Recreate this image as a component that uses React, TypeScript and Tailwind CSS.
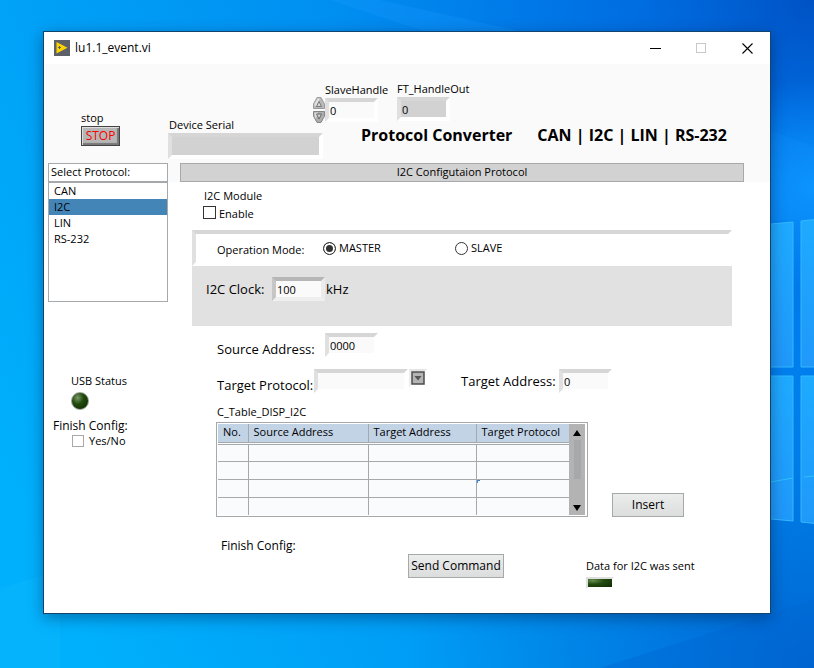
import { useState, type ReactNode } from 'react';

const PROTOCOLS = ['CAN', 'I2C', 'LIN', 'RS-232'];
const ROWS = [0, 1, 2, 3];
const BEVEL = 'border-4 border-t-[#d6d6d6] border-l-[#e0e0e0]';
const BEVEL_WHITE = BEVEL + ' border-r-white border-b-white';

function Wallpaper() {
  return (
    <svg
      className="absolute inset-0 h-full w-full"
      viewBox="0 0 814 668"
      preserveAspectRatio="none"
      aria-hidden="true"
    >
      <defs>
        <linearGradient id="sky" x1="0" y1="0.7" x2="1" y2="0.3">
          <stop offset="0" stopColor="#00b0fc" />
          <stop offset="0.5" stopColor="#0094f2" />
          <stop offset="1" stopColor="#007cf0" />
        </linearGradient>
        <radialGradient id="topDark" cx="1" cy="0" r="0.6">
          <stop offset="0" stopColor="#0052c4" />
          <stop offset="0.35" stopColor="#0064d8" stopOpacity="0.7" />
          <stop offset="1" stopColor="#0070e0" stopOpacity="0" />
        </radialGradient>
        <radialGradient id="bottomDark" cx="1" cy="1" r="0.5">
          <stop offset="0" stopColor="#0064d0" />
          <stop offset="1" stopColor="#0078dc" stopOpacity="0" />
        </radialGradient>
        <radialGradient id="glow" cx="1" cy="0.28" r="0.16">
          <stop offset="0" stopColor="#0a94ff" />
          <stop offset="1" stopColor="#0a94ff" stopOpacity="0" />
        </radialGradient>
        <linearGradient id="pane" x1="0" y1="0" x2="0" y2="1">
          <stop offset="0" stopColor="#1eaaff" />
          <stop offset="1" stopColor="#2098fa" />
        </linearGradient>
      </defs>
      <rect width="814" height="668" fill="url(#sky)" />
      <rect width="814" height="668" fill="url(#topDark)" />
      <rect width="814" height="668" fill="url(#bottomDark)" />
      <rect width="814" height="668" fill="url(#glow)" />
      <path d="M330 0L450 40H560L380 0Z" fill="#1c9cff" opacity="0.25" />
      <path d="M770 130L814 146V220H770Z" fill="#1c9cff" opacity="0.15" />
      <path d="M600 668L814 600V668Z" fill="#0064d0" opacity="0.35" />
      <path d="M0 588L60 570V668H0Z" fill="#10b8ff" opacity="0.3" />
      <g fill="url(#pane)" stroke="#35b8ff" strokeWidth="1">
        <path d="M760 225L793 222V367H760Z" />
        <path d="M801 221L820 219V367H801Z" />
        <path d="M760 376H793V521L760 518Z" />
        <path d="M801 376H820V524L801 522Z" />
      </g>
      <path d="M770 482L793 478M804 477L814 476" stroke="#2cc0ff" strokeWidth="1" />
    </svg>
  );
}

function AppIcon() {
  return (
    <svg className="h-4 w-4" viewBox="0 0 16 16" aria-hidden="true">
      <rect width="16" height="16" fill="#5d6066" />
      <path d="M2.5 2L13.5 7.7L2.5 13.5Z" fill="#fdd302" />
      <path d="M4 7.5H7M5.5 6V9" stroke="#5d6066" strokeWidth="1" />
    </svg>
  );
}

function Spinner() {
  return (
    <div className="flex h-[26px] w-3 flex-col">
      <button type="button" aria-label="Increase slave handle" className="h-[13px] w-3">
        <svg viewBox="0 0 12 13" className="block h-[13px] w-3">
          <path d="M4 .5H8L11.500 7V11.500H.5V7Z" fill="#b9b9b9" stroke="#9a9a9a" />
          <path d="M4.500 1.500H7L3 9H1.500V7Z" fill="#e2e2e2" />
          <path d="M6 4.500L8.500 9.500H3.500Z" fill="#d8d8d8" stroke="#666" strokeWidth=".8" />
        </svg>
      </button>
      <button type="button" aria-label="Decrease slave handle" className="h-[13px] w-3">
        <svg viewBox="0 0 12 13" className="block h-[13px] w-3">
          <path d="M.5 1.500H11.500V6L8 12.500H4L.5 6Z" fill="#adadad" stroke="#858585" />
          <path d="M1.500 2.500H5L3 9L1.500 6Z" fill="#dcdcdc" />
          <path d="M3.500 4H8.500L6 9Z" fill="#d0d0d0" stroke="#555" strokeWidth=".8" />
        </svg>
      </button>
    </div>
  );
}

function TitleBar() {
  return (
    <header className="flex h-8 items-center bg-white pl-2.5">
      <AppIcon />
      <h1 className="flex-1 pl-[5px] text-[12px]">lu1.1_event.vi</h1>
      <button type="button" aria-label="Minimize" className="flex h-8 w-[46px] items-center justify-center">
        <svg width="11" height="11" viewBox="0 0 11 11" shapeRendering="crispEdges">
          <path d="M0 5.500H11" stroke="#000" />
        </svg>
      </button>
      <button type="button" aria-label="Maximize" disabled className="flex h-8 w-[46px] items-center justify-center">
        <svg width="11" height="11" viewBox="0 0 11 11" shapeRendering="crispEdges">
          <rect x=".5" y=".5" width="9" height="9" fill="none" stroke="#c8c8c8" />
        </svg>
      </button>
      <button type="button" aria-label="Close" className="flex h-8 w-[46px] items-center justify-center">
        <svg width="11" height="11" viewBox="0 0 11 11">
          <path d="M.5 .5L10.500 10.500M10.500 .5L.5 10.500" stroke="#000" strokeWidth="1.100" />
        </svg>
      </button>
    </header>
  );
}

function PushButton({ className, children }: { className: string; children: ReactNode }) {
  return (
    <button
      type="button"
      className={'h-6 border border-[#a6a9ac] bg-linear-to-b from-[#ebecec] to-[#dcdddd] text-[12px] ' + className}
    >
      {children}
    </button>
  );
}

function TopPanel() {
  return (
    <section className="h-[99px] bg-[#fafafa]">
      <div className="flex pt-4 pl-[269px]">
        <div className="pt-[17px]">
          <Spinner />
        </div>
        <div className="flex w-[72px] flex-col">
          <label htmlFor="slave" className="pt-0.5 whitespace-nowrap">SlaveHandle</label>
          <input id="slave" defaultValue="0" className={'h-6 w-[53px] bg-[#fafafa] pl-px outline-none ' + BEVEL_WHITE} />
        </div>
        <div className="flex flex-col">
          <label htmlFor="ftout" className="pt-px">FT_HandleOut</label>
          <input id="ftout" readOnly value="0" className={'h-6 w-[53px] bg-[#d2d2d2] pl-px outline-none ' + BEVEL_WHITE} />
        </div>
      </div>
      <div className="-mt-[13px] flex pl-[37px]">
        <div className="w-[87px]">
          <p>stop</p>
          <button
            type="button"
            className="block h-5 w-[39px] border border-[#444] bg-[#b6b6b6] text-[12px] leading-4 text-[#f80000] shadow-[inset_1px_1px_0_#ddd,inset_-2px_-2px_1px_#777]"
          >
            STOP
          </button>
        </div>
        <div className="flex w-[155px] flex-col pt-[7px]">
          <label htmlFor="serial" className="pl-px">Device Serial</label>
          <input id="serial" readOnly value="" className={'h-[26px] w-full bg-[#d2d2d2] outline-none ' + BEVEL_WHITE} />
        </div>
        <h2 className="flex gap-[25px] pt-[15px] pl-[38px] text-[16px] leading-5 font-bold whitespace-nowrap">
          <span>Protocol Converter</span>
          <span>CAN | I2C | LIN | RS-232</span>
        </h2>
      </div>
    </section>
  );
}

function Sidebar() {
  const [selected, setSelected] = useState('I2C');
  return (
    <aside className="w-[120px]">
      <ul role="listbox" aria-labelledby="protocols" className="h-[120px] border border-[#a6a9ac] bg-white">
        {PROTOCOLS.map((name) => (
          <li key={name} role="option" aria-selected={name === selected}>
            <button
              type="button"
              onClick={() => setSelected(name)}
              className={'block h-4 w-full pl-[5px] text-left ' + (name === selected ? 'bg-[#4485b8]' : 'bg-white')}
            >
              {name}
            </button>
          </li>
        ))}
      </ul>
      <div className="pt-[71px] pl-[23px]">
        <p>USB Status</p>
        <span className="mt-[3px] block h-[18px] w-[18px] rounded-full border border-[#9a9f98] bg-radial-[at_35%_30%] from-[#7a9a6a] via-[#214a0c] via-40% to-[#0c2402]" />
      </div>
      <p className="mt-2 pl-[5px] text-[12px]">Finish Config:</p>
      <label className="flex h-3.5 items-center gap-[5px] pl-6">
        <input type="checkbox" className="h-3 w-3 appearance-none border border-[#a6a9ac] bg-white checked:bg-[#4485b8]" />
        Yes/No
      </label>
    </aside>
  );
}

function ModeRadio({ label, checked, onPick }: { label: string; checked: boolean; onPick: () => void }) {
  return (
    <label className="flex items-center gap-[3px]">
      <input
        type="radio"
        name="mode"
        checked={checked}
        onChange={onPick}
        className="h-[13px] w-[13px] appearance-none rounded-full border border-[#333] bg-white checked:bg-[#333] checked:shadow-[inset_0_0_0_2px_#fff]"
      />
      {label}
    </label>
  );
}

function ResultTable() {
  return (
    <div className="flex w-[372px] border border-[#a6a9ac] bg-white p-px">
      <table className="flex-1 table-fixed border-collapse bg-[#f9fbfd]">
        <thead>
          <tr className="h-[19px] border-b-3 border-double border-[#a6a9ac] bg-[#c2d3e6] text-left">
            <th className="w-[30px] border-r border-solid border-[#a6a9ac] p-0 pb-px pl-[5px] font-normal">No.</th>
            <th className="w-[120px] border-r border-solid border-[#a6a9ac] p-0 pb-px pl-[5px] font-normal">Source Address</th>
            <th className="w-[108px] border-r border-solid border-[#a6a9ac] p-0 pb-px pl-[5px] font-normal">Target Address</th>
            <th className="p-0 pb-px pl-[5px] font-normal whitespace-nowrap">Target Protocol</th>
          </tr>
        </thead>
        <tbody>
          {ROWS.map((row) => (
            <tr key={row} className="h-[18px] border-b border-[#a6a9ac] last:border-b-0">
              <td className="border-r border-[#a6a9ac] p-0" />
              <td className="border-r border-[#a6a9ac] p-0" />
              <td className="border-r border-[#a6a9ac] p-0" />
              <td className="p-0 align-top">
                {row === 2 && <span className="block h-[3px] w-[3px] border-t border-l border-[#3c82e0]" />}
              </td>
            </tr>
          ))}
        </tbody>
      </table>
      <div className="mr-px flex w-4 flex-col items-center bg-[#b3b3b3] pt-1.5 pb-1">
        <button type="button" aria-label="Scroll up">
          <svg width="8" height="6" viewBox="0 0 8 6" className="block"><path d="M4 0L8 6H0Z" /></svg>
        </button>
        <span className="mt-1 h-[39px] w-[7px] bg-[#a6a9ac]" />
        <button type="button" aria-label="Scroll down" className="mt-auto">
          <svg width="8" height="6" viewBox="0 0 8 6" className="block"><path d="M0 0H8L4 6Z" /></svg>
        </button>
      </div>
    </div>
  );
}

function ConfigPanel() {
  const [mode, setMode] = useState('MASTER');
  return (
    <main className="flex-1 pt-1.5 pr-[38px] pb-6 pl-6">
      <p className="pl-3">I2C Module</p>
      <label className="mt-0.5 flex items-start gap-[3px] pl-[11px]">
        <input type="checkbox" className="h-[13px] w-[13px] appearance-none border border-[#333] bg-white checked:bg-[#333]" />
        Enable
      </label>
      <div
        role="radiogroup"
        aria-labelledby="mode-label"
        className={'mt-2 flex h-9 items-start pt-1.5 pl-[21px] ' + BEVEL_WHITE}
      >
        <span id="mode-label" className="w-[106px] pt-0.5">Operation Mode:</span>
        <div className="w-[132px]">
          <ModeRadio label="MASTER" checked={mode === 'MASTER'} onPick={() => setMode('MASTER')} />
        </div>
        <ModeRadio label="SLAVE" checked={mode === 'SLAVE'} onPick={() => setMode('SLAVE')} />
      </div>
      <div className="h-15 bg-[#e1e1e1] pt-[11px] pl-3.5">
        <div className="flex items-center">
          <label htmlFor="clock" className="w-[66px] text-[13px]">I2C Clock:</label>
          <input
            id="clock"
            defaultValue="100"
            className="h-6 w-[53px] border-4 border-t-[#b6b6b6] border-r-[#ececec] border-b-[#efefef] border-l-[#c6c6c6] bg-[#fafafa] pl-px outline-none"
          />
          <span className="pl-px text-[13px]">kHz</span>
        </div>
      </div>
      <div className="mt-[7px] flex items-end pl-[25px]">
        <label htmlFor="source" className="w-[108px] text-[13px]">Source Address:</label>
        <input id="source" defaultValue="0000" className={'h-6 w-[53px] bg-[#fafafa] pl-px outline-none ' + BEVEL_WHITE} />
      </div>
      <div className="mt-3 flex pl-[25px]">
        <label htmlFor="protocol" className="w-[97px] self-end text-[13px] whitespace-nowrap">Target Protocol:</label>
        <select
          id="protocol"
          defaultValue=""
          className={'h-6 w-[94px] appearance-none rounded-none bg-[#fafafa] outline-none ' + BEVEL_WHITE}
        >
          <option value="" />
          {PROTOCOLS.map((name) => (
            <option key={name}>{name}</option>
          ))}
        </select>
        <button
          type="button"
          aria-label="Open protocol list"
          className="ml-px h-[18px] w-[18px] border-2 border-t-[#e4e4e4] border-r-white border-b-white border-l-[#ececec]"
        >
          <svg viewBox="0 0 14 14" className="block h-3.5 w-3.5">
            <rect x="1" y="1" width="12" height="12" fill="#b4b4b4" stroke="#4c4c4c" strokeWidth="1.500" />
            <path d="M3.500 5H10.500L7 9.500Z" fill="#555" />
          </svg>
        </button>
        <div className="ml-[34px] flex items-center">
          <label htmlFor="target" className="w-[98px] text-[13px] whitespace-nowrap">Target Address:</label>
          <input id="target" defaultValue="0" className={'h-6 w-[53px] bg-[#fafafa] pl-px outline-none ' + BEVEL_WHITE} />
        </div>
      </div>
      <p className="mt-[11px] pl-[25px]">C_Table_DISP_I2C</p>
      <div className="mt-0.5 flex items-end gap-6 pl-6">
        <ResultTable />
        <PushButton className="w-[72px]">Insert</PushButton>
      </div>
      <p className="mt-[21px] pl-[29px] text-[12px]">Finish Config:</p>
      <div className="flex pl-[216px]">
        <PushButton className="w-24">Send Command</PushButton>
        <div className="pt-1 pl-[82px]">
          <p className="whitespace-nowrap">Data for I2C was sent</p>
          <span className="mt-[3px] block h-3 w-7 border-2 border-t-[#dedede] border-r-white border-b-white border-l-[#dedede] bg-radial-[at_20%_20%] from-[#6a9050] via-[#244c10] via-40% to-[#0e2a04]" />
        </div>
      </div>
    </main>
  );
}

export default function App() {
  return (
    <div className="relative min-h-screen overflow-hidden px-[43px] pt-[31px] pb-[53px] font-['Open_Sans','Noto_Sans',sans-serif] text-[11px] leading-4 text-black">
      <Wallpaper />
      <div className="relative border border-[#12456e] bg-white shadow-[0_4px_14px_rgba(0,20,60,0.4)]">
        <TitleBar />
        <TopPanel />
        <div className="flex h-[19px] gap-3 bg-[#fafafa] pr-[26px] pl-1">
          <h3 id="protocols" className="w-[120px] border border-[#a6a9ac] bg-white pl-0.5">Select Protocol:</h3>
          <h3 className="flex-1 border border-[#a6a9ac] bg-[#d2d2d2] text-center">I2C Configutaion Protocol</h3>
        </div>
        <div className="flex pl-1">
          <Sidebar />
          <ConfigPanel />
        </div>
      </div>
    </div>
  );
}
